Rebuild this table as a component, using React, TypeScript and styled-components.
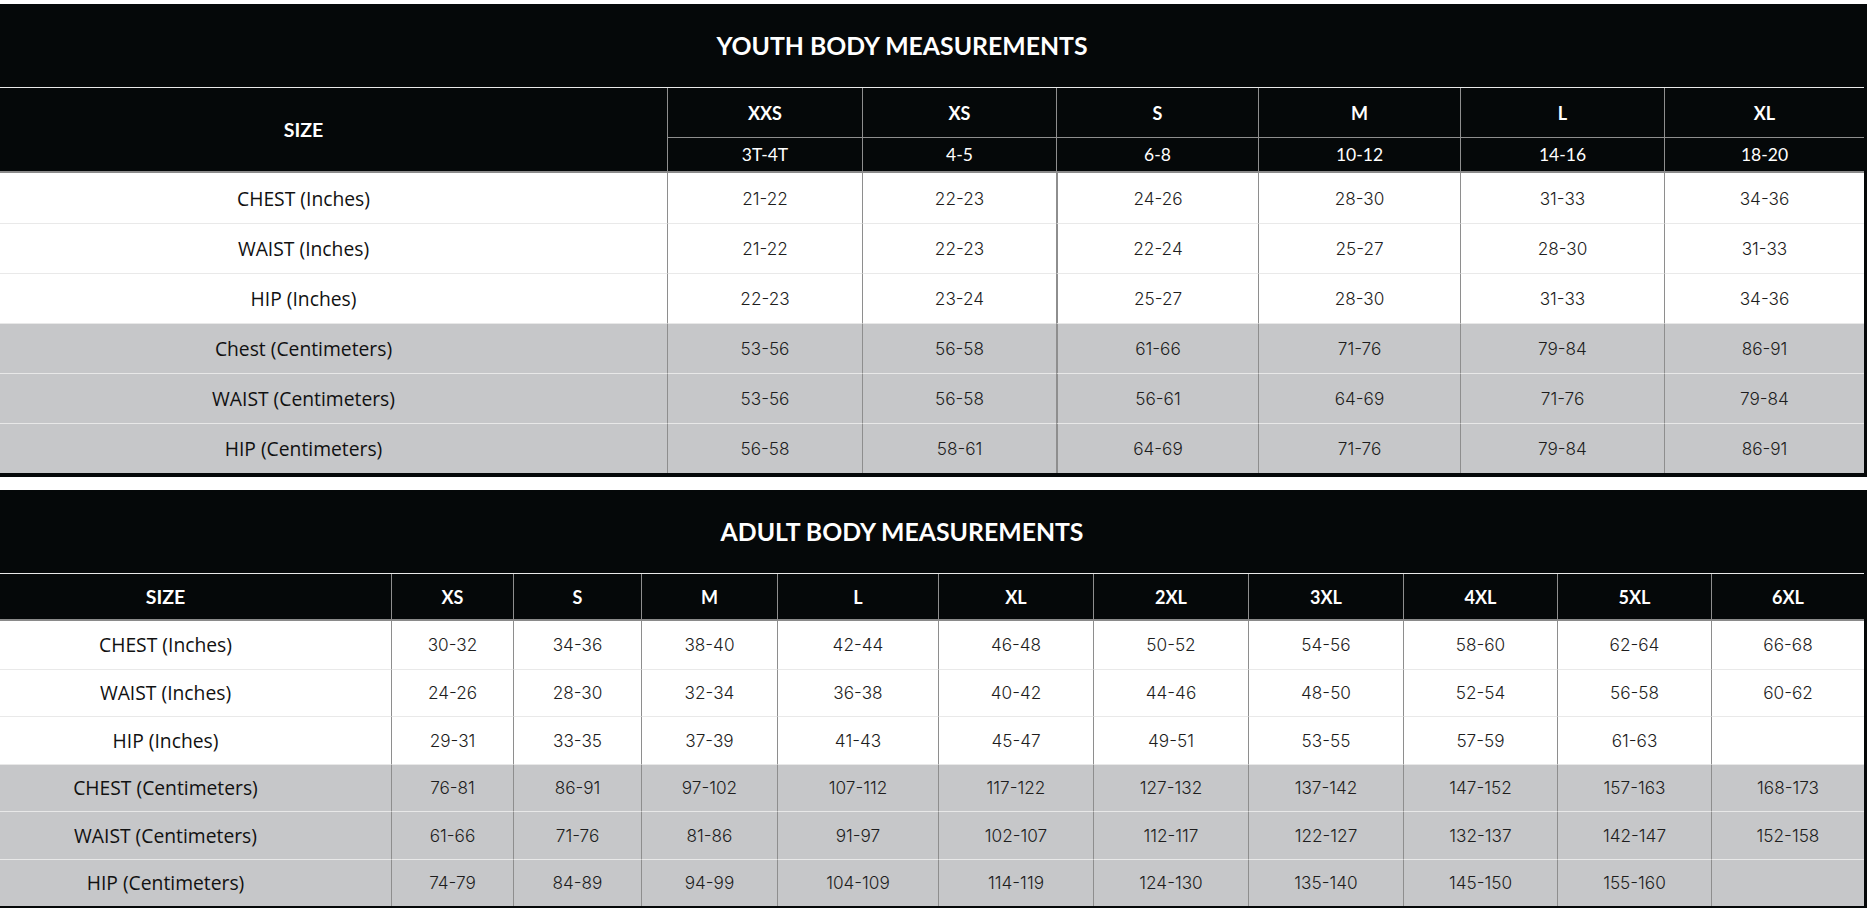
import React from "react";
import styled, { createGlobalStyle } from "styled-components";

const Global = createGlobalStyle`
  html, body { margin: 0; padding: 0; background: #ffffff; }
  #root { overflow: hidden; width: 1871px; height: 908px; }
`;

const INK = "#050809";
const GRAY_ROW = "#c6c7c9";
const COL_LINE = "#8e8e8e";

const Page = styled.div`
  display: flex;
  flex-direction: column;
  gap: 13px;
  padding-top: 4px;
  margin-left: -60px;
  width: 1927px;
`;

const Grid = styled.div<{ $cols: number[] }>`
  display: grid;
  grid-template-columns: ${(p) => p.$cols.map((c) => `${c}px`).join(" ")};
  background: ${INK};
  border-right: 3px solid ${INK};
  border-bottom: 4px solid ${INK};
`;

const Title = styled.div`
  grid-column: 1 / -1;
  height: 83px;
  display: flex;
  align-items: center;
  justify-content: center;
  border-bottom: 1px solid #e9e9e9;
  color: #ffffff;
  font-family: Lato, "Open Sans", sans-serif;
  font-weight: 700;
  font-size: 24.8px;
`;

const HeadCell = styled.div<{ $h: number; $line: boolean; $bottom: string; $span?: number; $bold: boolean }>`
  height: ${(p) => p.$h}px;
  grid-row: ${(p) => (p.$span ? `span ${p.$span}` : "auto")};
  display: flex;
  align-items: center;
  justify-content: center;
  color: #ffffff;
  font-family: Lato, "Open Sans", sans-serif;
  font-weight: ${(p) => (p.$bold ? 700 : 400)};
  font-size: ${(p) => (p.$bold ? 18 : 17.5)}px;
  border-left: ${(p) => (p.$line ? `1px solid ${COL_LINE}` : "none")};
  border-bottom: ${(p) => p.$bottom};
`;

const SizeHead = styled(HeadCell)`
  font-size: 19.5px;
`;

const Cell = styled.div<{ $h: number; $shade: boolean; $line: number; $top: boolean }>`
  height: ${(p) => p.$h}px;
  box-sizing: border-box;
  display: flex;
  align-items: center;
  justify-content: center;
  background: ${(p) => (p.$shade ? GRAY_ROW : "#ffffff")};
  border-left: ${(p) => (p.$line ? `${p.$line}px solid ${COL_LINE}` : "none")};
  border-top: ${(p) => (p.$top ? `1px solid ${p.$shade ? "#e8e8e8" : "#e9e9e9"}` : "none")};
  color: #1d1d1d;
  font-family: Inter, "Noto Sans", sans-serif;
  font-weight: 300;
  font-size: 17.2px;
`;

const LabelCell = styled(Cell)`
  color: #111111;
  font-family: "Open Sans", "Noto Sans", sans-serif;
  font-weight: 500;
  font-size: 19.3px;
`;

type Row = { label: string; values: string[] };

const youthSizes = ["XXS", "XS", "S", "M", "L", "XL"];
const youthAges = ["3T-4T", "4-5", "6-8", "10-12", "14-16", "18-20"];
const youthRows: Row[] = [
  { label: "CHEST (Inches)", values: ["21-22", "22-23", "24-26", "28-30", "31-33", "34-36"] },
  { label: "WAIST (Inches)", values: ["21-22", "22-23", "22-24", "25-27", "28-30", "31-33"] },
  { label: "HIP (Inches)", values: ["22-23", "23-24", "25-27", "28-30", "31-33", "34-36"] },
  { label: "Chest (Centimeters)", values: ["53-56", "56-58", "61-66", "71-76", "79-84", "86-91"] },
  { label: "WAIST (Centimeters)", values: ["53-56", "56-58", "56-61", "64-69", "71-76", "79-84"] },
  { label: "HIP (Centimeters)", values: ["56-58", "58-61", "64-69", "71-76", "79-84", "86-91"] },
];

const adultSizes = ["XS", "S", "M", "L", "XL", "2XL", "3XL", "4XL", "5XL", "6XL"];
const adultRows: Row[] = [
  { label: "CHEST (Inches)", values: ["30-32", "34-36", "38-40", "42-44", "46-48", "50-52", "54-56", "58-60", "62-64", "66-68"] },
  { label: "WAIST (Inches)", values: ["24-26", "28-30", "32-34", "36-38", "40-42", "44-46", "48-50", "52-54", "56-58", "60-62"] },
  { label: "HIP (Inches)", values: ["29-31", "33-35", "37-39", "41-43", "45-47", "49-51", "53-55", "57-59", "61-63", ""] },
  { label: "CHEST (Centimeters)", values: ["76-81", "86-91", "97-102", "107-112", "117-122", "127-132", "137-142", "147-152", "157-163", "168-173"] },
  { label: "WAIST (Centimeters)", values: ["61-66", "71-76", "81-86", "91-97", "102-107", "112-117", "122-127", "132-137", "142-147", "152-158"] },
  { label: "HIP (Centimeters)", values: ["74-79", "84-89", "94-99", "104-109", "114-119", "124-130", "135-140", "145-150", "155-160", ""] },
];

const youthCols = [727, 195, 194, 202, 202, 204, 200];
const adultCols = [451, 122, 128, 136, 161, 155, 155, 155, 154, 154, 153];

const HEADER_RULE = `2px solid #8a8a8a`;

function DataRows({ rows, h, thickCol }: { rows: Row[]; h: number; thickCol?: number }) {
  return (
    <>
      {rows.map((r, i) => {
        const shade = i >= 3;
        const top = i > 0;
        return (
          <React.Fragment key={r.label}>
            <LabelCell $h={h} $shade={shade} $line={0} $top={top}>
              {r.label}
            </LabelCell>
            {r.values.map((v, j) => (
              <Cell key={j} $h={h} $shade={shade} $line={thickCol === j ? 2 : 1} $top={top}>
                {v}
              </Cell>
            ))}
          </React.Fragment>
        );
      })}
    </>
  );
}

export default function App() {
  return (
    <>
      <Global />
      <Page>
        <Grid $cols={youthCols}>
          <Title>YOUTH BODY MEASUREMENTS</Title>
          <SizeHead $h={83} $span={2} $line={false} $bottom={HEADER_RULE} $bold>
            SIZE
          </SizeHead>
          {youthSizes.map((s) => (
            <HeadCell key={s} $h={49} $line $bottom={`1px solid ${COL_LINE}`} $bold>
              {s}
            </HeadCell>
          ))}
          {youthAges.map((a) => (
            <HeadCell key={a} $h={33} $line $bottom={HEADER_RULE} $bold={false}>
              {a}
            </HeadCell>
          ))}
          <DataRows rows={youthRows} h={50} thickCol={2} />
        </Grid>
        <Grid $cols={adultCols}>
          <Title>ADULT BODY MEASUREMENTS</Title>
          <SizeHead $h={45} $line={false} $bottom={HEADER_RULE} $bold>
            SIZE
          </SizeHead>
          {adultSizes.map((s) => (
            <HeadCell key={s} $h={45} $line $bottom={HEADER_RULE} $bold>
              {s}
            </HeadCell>
          ))}
          <DataRows rows={adultRows} h={47.5} />
        </Grid>
      </Page>
    </>
  );
}
